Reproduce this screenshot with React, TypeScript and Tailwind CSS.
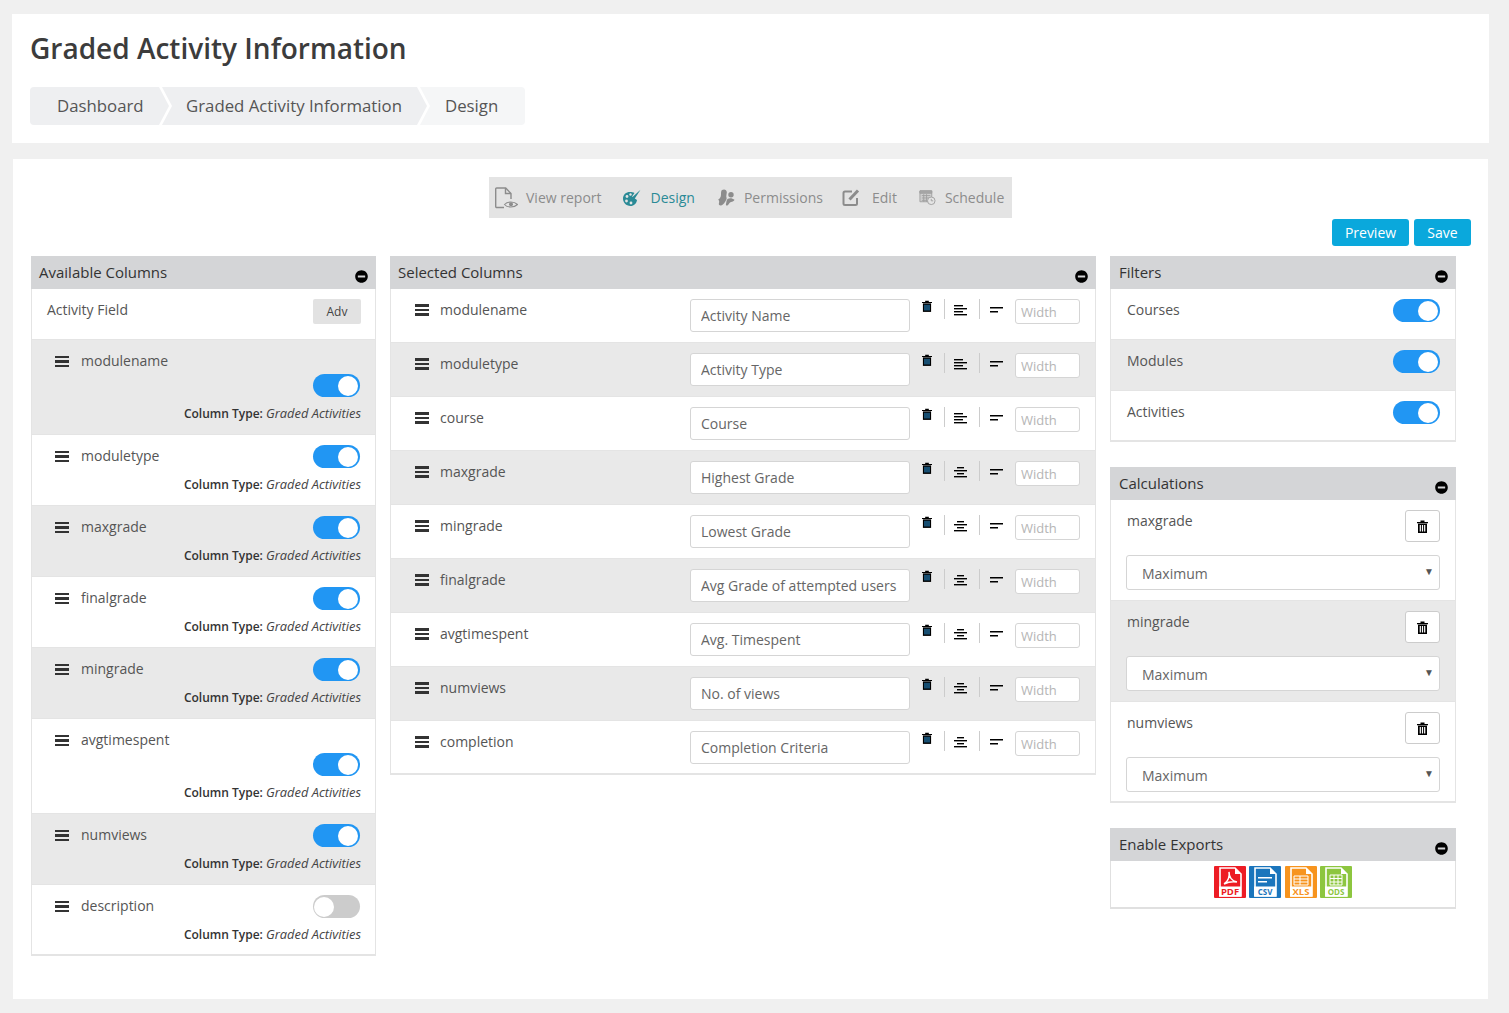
import { FaMinusCircle } from "react-icons/fa"
import type { ReactNode } from "react"

const font = "font-['Open_Sans',sans-serif]"

function Hamburger() {
  return (
    <span className="mt-[2px] flex w-[14px] shrink-0 flex-col gap-[2px]">
      <span className="h-[2.5px] bg-[#333]"></span>
      <span className="h-[2.5px] bg-[#333]"></span>
      <span className="h-[2.5px] bg-[#333]"></span>
    </span>
  )
}

function Toggle({ on = true }: { on?: boolean }) {
  return (
    <span className={`flex h-[23px] w-[47px] shrink-0 items-center rounded-full ${on ? "justify-end bg-[#2196f3] pr-[2px]" : "justify-start bg-[#ccc] pl-px"}`}>
      <span className="h-[20px] w-[20px] rounded-full bg-white"></span>
    </span>
  )
}

function TrashIcon({ big = false }: { big?: boolean }) {
  return (
    <svg viewBox="0 0 11 13" className={big ? "h-[13px] w-[11px]" : "h-[12px] w-[10px]"}>
      <path d="M3.5 2V.6h4V2H11v1.3H0V2z" fill="#000" />
      <path d="M1 3.6h9V13H1z" fill="#000" />
      <path d="M2.7 5h1.2v6.5H2.7zM4.9 5h1.2v6.5H4.9zM7.1 5h1.2v6.5H7.1z" fill={big ? "#fff" : "#2b8fd0"} />
    </svg>
  )
}

function AlignIcon({ center }: { center: boolean }) {
  const rows = center
    ? ["M3 1h7v1.4H3z", "M0 4h13v1.4H0z", "M3 7h7v1.4H3z", "M0 10h13v1.4H0z"]
    : ["M0 1h9v1.4H0z", "M0 4h13v1.4H0z", "M0 7h9v1.4H0z", "M0 10h13v1.4H0z"]
  return (
    <svg viewBox="0 0 13 12" className="h-[12px] w-[13px]">
      {rows.map((d) => (
        <path key={d} d={d} fill="#000" />
      ))}
    </svg>
  )
}

function SortIcon() {
  return (
    <svg viewBox="0 0 13 6" className="h-[6px] w-[13px]">
      <path d="M0 0h13v1.6H0zM0 4h8v1.6H0z" fill="#000" />
    </svg>
  )
}

function PanelHeader({ title, inset = false }: { title: string; inset?: boolean }) {
  return (
    <div className={`flex h-[33px] items-center justify-between bg-[#d4d5d7] pr-[8px] ${inset ? "pl-[9px]" : "pl-[8px]"}`}>
      <span className="text-[15px] text-[#333]">{title}</span>
      <FaMinusCircle className="mt-[8px] h-[13px] w-[13px] text-black" />
    </div>
  )
}

const available = [
  { name: "modulename", tall: true },
  { name: "moduletype" },
  { name: "maxgrade" },
  { name: "finalgrade" },
  { name: "mingrade" },
  { name: "avgtimespent", tall: true },
  { name: "numviews" },
  { name: "description", off: true },
]

function AvailableColumns() {
  return (
    <div className="w-[345px] shrink-0">
      <PanelHeader title="Available Columns" />
      <div className="border-x border-[#e4e4e4]">
        <div className="flex h-[51px] justify-between border-b border-[#e4e4e4] pl-[15px] pr-[14px] pt-[10px]">
          <span className="text-[14px] leading-[22px] text-[#555]">Activity Field</span>
          <span className="flex h-[25px] w-[48px] items-center justify-center rounded-[2px] bg-[#e2e2e2] text-[12px] text-[#444]">Adv</span>
        </div>
        {available.map((c, i) => (
          <div key={c.name} className={`border-b border-[#e4e4e4] pl-[23px] pr-[14px] pt-[10px] last:border-b-2 ${c.tall ? "h-[95px]" : "h-[71px]"} ${i % 2 === 0 ? "bg-[#e9e9e9]" : "bg-white"}`}>
            <div className="flex h-[23px] justify-between pr-px">
              <span className="-mt-px flex h-[23px] items-center gap-[12px] text-[14px] text-[#555]">
                <Hamburger />
                {c.name}
              </span>
              {!c.tall && <Toggle on={!c.off} />}
            </div>
            {c.tall && (
              <div className="mt-px flex justify-end pr-px">
                <Toggle />
              </div>
            )}
            <div className="mt-[7px] flex h-[20px] items-center justify-end text-[12px] text-[#333]">
              <b className="font-semibold">Column Type:&nbsp;</b>
              <i className="text-[12.9px] text-[#444]">Graded Activities</i>
            </div>
          </div>
        ))}
      </div>
    </div>
  )
}

const selected = [
  { name: "modulename", label: "Activity Name" },
  { name: "moduletype", label: "Activity Type" },
  { name: "course", label: "Course" },
  { name: "maxgrade", label: "Highest Grade", center: true },
  { name: "mingrade", label: "Lowest Grade", center: true },
  { name: "finalgrade", label: "Avg Grade of attempted users", center: true },
  { name: "avgtimespent", label: "Avg. Timespent", center: true },
  { name: "numviews", label: "No. of views", center: true },
  { name: "completion", label: "Completion Criteria", center: true },
]

function SelectedColumns() {
  return (
    <div className="w-[706px] shrink-0 self-start">
      <PanelHeader title="Selected Columns" />
      <div className="border-x border-[#e4e4e4]">
        {selected.map((c, i) => (
          <div key={c.name} className={`flex h-[54px] items-start border-b border-[#e4e4e4] pl-[24px] pt-[10px] last:border-b-2 ${i % 2 === 1 ? "bg-[#e9e9e9]" : "bg-white"}`}>
            <span className="-mt-px flex h-[22px] w-[275px] shrink-0 items-center gap-[11px] text-[14px] text-[#555]">
              <Hamburger />
              {c.name}
            </span>
            <input
              readOnly
              defaultValue={c.label}
              className="h-[33px] w-[220px] shrink-0 rounded-[3px] border border-[#d5d5d5] bg-white px-[10px] pb-[1px] text-[14px] text-[#666] outline-none"
            />
            <span className="ml-[12px] mt-px w-[10px] shrink-0"><TrashIcon /></span>
            <span className="ml-[12px] h-[20px] w-px shrink-0 bg-[#ccc]"></span>
            <span className="ml-[9px] mt-[5px] w-[13px] shrink-0"><AlignIcon center={!!c.center} /></span>
            <span className="ml-[12px] h-[20px] w-px shrink-0 bg-[#ccc]"></span>
            <span className="ml-[10px] mt-[8px] w-[13px] shrink-0"><SortIcon /></span>
            <input
              readOnly
              placeholder="Width"
              className="ml-[12px] h-[25px] w-[65px] shrink-0 rounded-[3px] border border-[#d5d5d5] bg-white px-[5px] text-[13px] outline-none placeholder:text-[#b5b5b5]"
            />
          </div>
        ))}
      </div>
    </div>
  )
}

function Filters() {
  return (
    <div>
      <PanelHeader title="Filters" inset />
      <div className="border-x border-[#e4e4e4]">
        {["Courses", "Modules", "Activities"].map((f, i) => (
          <div key={f} className={`flex h-[51px] justify-between border-b border-[#e4e4e4] pl-[16px] pr-[15px] pt-[10px] last:border-b-2 ${i % 2 === 1 ? "bg-[#e9e9e9]" : "bg-white"}`}>
            <span className="text-[14px] leading-[22px] text-[#555]">{f}</span>
            <Toggle />
          </div>
        ))}
      </div>
    </div>
  )
}

function Calculations() {
  return (
    <div>
      <PanelHeader title="Calculations" inset />
      <div className="border-x border-[#e4e4e4]">
        {["maxgrade", "mingrade", "numviews"].map((f, i) => (
          <div key={f} className={`h-[101px] border-b border-[#e4e4e4] pl-[15px] pr-[15px] pt-[10px] last:border-b-2 ${i % 2 === 1 ? "bg-[#e9e9e9]" : "bg-white"}`}>
            <div className="flex justify-between">
              <span className="pl-px text-[14px] leading-[22px] text-[#555]">{f}</span>
              <span className="flex h-[32px] w-[35px] items-center justify-center rounded-[3px] border border-[#ccc] bg-white">
                <TrashIcon big />
              </span>
            </div>
            <div className="relative mt-[13px] flex h-[35px] items-center rounded-[3px] border border-[#d5d5d5] bg-white pl-[15px] pt-px text-[14px] text-[#666]">
              Maximum
              <span className="absolute right-[5px] top-[8px] text-[10px] text-[#555]">▼</span>
            </div>
          </div>
        ))}
      </div>
    </div>
  )
}

function ExportIcon({ bg, label, size, ink, children }: { bg: string; label: string; size: number; ink: string; children: ReactNode }) {
  return (
    <svg viewBox="0 0 32 32" className="h-[32px] w-[32px]">
      <rect width="32" height="32" rx="1" fill={bg} />
      <path d="M6 2h15l6 6v22H6z" fill="none" stroke="#fff" strokeWidth="1.6" />
      <path d="M21 2v6h6z" fill="#fff" />
      {children}
      <rect x="5" y="20.500" width="22" height="10" fill="#fff" />
      <text x="16" y="29" textAnchor="middle" fontSize={size} fontWeight="700" fontFamily="'Open Sans',sans-serif" fill={ink}>
        {label}
      </text>
    </svg>
  )
}

function Exports() {
  return (
    <div>
      <PanelHeader title="Enable Exports" inset />
      <div className="flex h-[48px] justify-center gap-[3.5px] border-b-2 border-x border-[#e0e0e0] pt-[5px]">
        <ExportIcon bg="#ed1c24" label="PDF" size={9.5} ink="#ed1c24">
          <path d="M10 18c4-2 6-8 5-12 0 5 3 9 8 10-5-1-9 0-13 2z" fill="none" stroke="#fff" strokeWidth="1.5" />
        </ExportIcon>
        <ExportIcon bg="#1a75bc" label="CSV" size={8} ink="#1a75bc">
          <path d="M9 11h14v1.6H9zM9 15h9v1.6H9z" fill="#fff" />
        </ExportIcon>
        <ExportIcon bg="#f7941e" label="XLS" size={9.5} ink="#f7941e">
          <path d="M9 10h14v9H9zM9 13h14M9 16h14M15 10v9" fill="none" stroke="#fff" strokeWidth="1" />
        </ExportIcon>
        <ExportIcon bg="#8dc63f" label="ODS" size={8} ink="#8dc63f">
          <path d="M10 9h12v10H10zM10 12.500h12M10 16h12M14 9v10M18 9v10" fill="none" stroke="#fff" strokeWidth="1" />
        </ExportIcon>
      </div>
    </div>
  )
}

function Chevron({ left, right }: { left: string; right: string }) {
  return (
    <svg viewBox="0 0 14 38" className="h-[38px] w-[14px] shrink-0">
      <rect width="14" height="38" fill={right} />
      <path d="M0 0h4l10 19-10 19H0z" fill="#fff" />
      <path d="M0 0h1l10 19L1 38H0z" fill={left} />
    </svg>
  )
}

function Breadcrumb() {
  return (
    <div className="mt-[19px] flex h-[38px] w-fit text-[16.8px] text-[#555]">
      <span className="flex w-[128px] items-center rounded-l-[4px] bg-[#eeeff1] pl-[27px]">Dashboard</span>
      <Chevron left="#eeeff1" right="#eeeff1" />
      <span className="flex w-[244px] items-center bg-[#eeeff1] pl-[14px]">Graded Activity Information</span>
      <Chevron left="#eeeff1" right="#f5f6f7" />
      <span className="flex w-[95px] items-center rounded-r-[4px] bg-[#f5f6f7] pl-[15px]">Design</span>
    </div>
  )
}

function Toolbar() {
  return (
    <div className="ml-[458px] flex h-[41px] w-[523px] items-center bg-[#e4e4e4] pl-[6px] text-[14px] text-[#8c8c8c]">
      <svg viewBox="0 0 23 22" className="h-[22px] w-[23px] shrink-0" fill="none" stroke="#8c8c8c" strokeWidth="1.400">
        <path d="M9 20.500H1.700a1 1 0 0 1-1-1V2a1 1 0 0 1 1-1h9L16 6.500V12" />
        <path d="M10.500 1v5.500H16" />
        <path d="M9.500 17.500c3-3.400 9.500-3.400 13 0-3.500 3.400-10 3.400-13 0z" strokeWidth="1.100" />
        <circle cx="16" cy="17.300" r="2" fill="#8c8c8c" stroke="none" />
      </svg>
      <span className="ml-[8px]">View report</span>
      <svg viewBox="0 0 19 18" className="ml-[20px] h-[18px] w-[19px] shrink-0">
        <path d="M8 3C4 3 1 5.700 1 9.500S4 17 8.500 17c3.500 0 6-2.500 6.500-6L10 7.500 12.500 4C11.500 3.300 9.500 3 8 3z" fill="#2a8a96" />
        <circle cx="5" cy="7.500" r="1.400" fill="#e4e4e4" />
        <circle cx="8.500" cy="5.500" r="1.200" fill="#e4e4e4" />
        <circle cx="4.500" cy="12" r="1.400" fill="#e4e4e4" />
        <circle cx="9" cy="14" r="1.400" fill="#e4e4e4" />
        <path d="M18.500 0.800L10.500 8c-1 1-1.500 2-1.500 3.500 1.500 0 2.500-.5 3.500-1.500z" fill="#2a8a96" />
      </svg>
      <span className="ml-[10px] text-[#2a8a96]">Design</span>
      <svg viewBox="0 0 18 17" className="ml-[22px] h-[17px] w-[18px] shrink-0" fill="#8c8c8c">
        <path d="M5 1c2.500-1.500 5 0 4.800 2.500C9.600 5.500 9 7 9.500 8.500c.5 1.500-.5 3-1.500 4.500-1 1.500-2.500 3.500-4.500 3.500-1.500 0-2-1-1.500-2.500.5-1.500 0-2.500-.8-3.500C3 9.500 4 8 4 5.500 4 3.500 4 1.800 5 1z" />
        <circle cx="14" cy="5.800" r="2.700" />
        <path d="M10.500 10c1.500-1.200 5-1.200 7 .8-.5 1.500-2 2-3.500 2.200-1.500.5-2 2-3 3-1.200 1-2.500.5-2-1 .5-1.500 0-3 1.500-5z" />
      </svg>
      <span className="ml-[9px]">Permissions</span>
      <svg viewBox="0 0 18 17" className="ml-[19px] h-[17px] w-[18px] shrink-0" fill="none" stroke="#8c8c8c" strokeWidth="2">
        <path d="M10 2.500H3a1.500 1.500 0 0 0-1.500 1.500v10.500A1.500 1.500 0 0 0 3 16h10.500a1.500 1.500 0 0 0 1.500-1.500V9" />
        <path d="M7.500 10.500L16 1.500" strokeWidth="3" />
      </svg>
      <span className="ml-[12px]">Edit</span>
      <svg viewBox="0 0 18 17" className="ml-[22px] h-[17px] w-[17px] shrink-0" fill="none" stroke="#a0a0a0" strokeWidth="1">
        <path d="M1 1.500h12.500V13H1z" fill="#d0d0d0" />
        <path d="M1 1.500h12.500V4H1z" fill="#a8a8a8" />
        <path d="M3 6.500h9M3 9h9M3 11.500h5M5 5v8M8 5v8" />
        <circle cx="13" cy="12" r="4" fill="#e4e4e4" />
        <path d="M13 10v2h2" />
      </svg>
      <span className="ml-[9px]">Schedule</span>
    </div>
  )
}

export default function App() {
  return (
    <div className={`${font} min-h-[1013px] bg-[#f0f0f0] pt-[14px]`}>
      <div className="ml-[12px] mr-[20px] h-[129px] bg-white pl-[18px] pt-[15px]">
        <h1 className="text-[28px] font-semibold leading-[39px] text-[#3c3c3c]">Graded Activity Information</h1>
        <Breadcrumb />
      </div>
      <div className="ml-[13px] mr-[21px] mt-[16px] h-[840px] bg-white pl-[18px] pr-[17px] pt-[18px]">
        <Toolbar />
        <div className="flex h-[38px] items-start justify-end gap-[5px]">
          <span className="mt-px flex h-[27px] w-[77px] items-center justify-center rounded-[3px] bg-[#0aa8dc] text-[14px] text-white">Preview</span>
          <span className="mt-px flex h-[27px] w-[57px] items-center justify-center rounded-[3px] bg-[#0aa8dc] text-[14px] text-white">Save</span>
        </div>
        <div className="flex items-start gap-[14px]">
          <AvailableColumns />
          <SelectedColumns />
          <div className="flex w-[346px] shrink-0 flex-col gap-[25px]">
            <Filters />
            <Calculations />
            <Exports />
          </div>
        </div>
      </div>
    </div>
  )
}
